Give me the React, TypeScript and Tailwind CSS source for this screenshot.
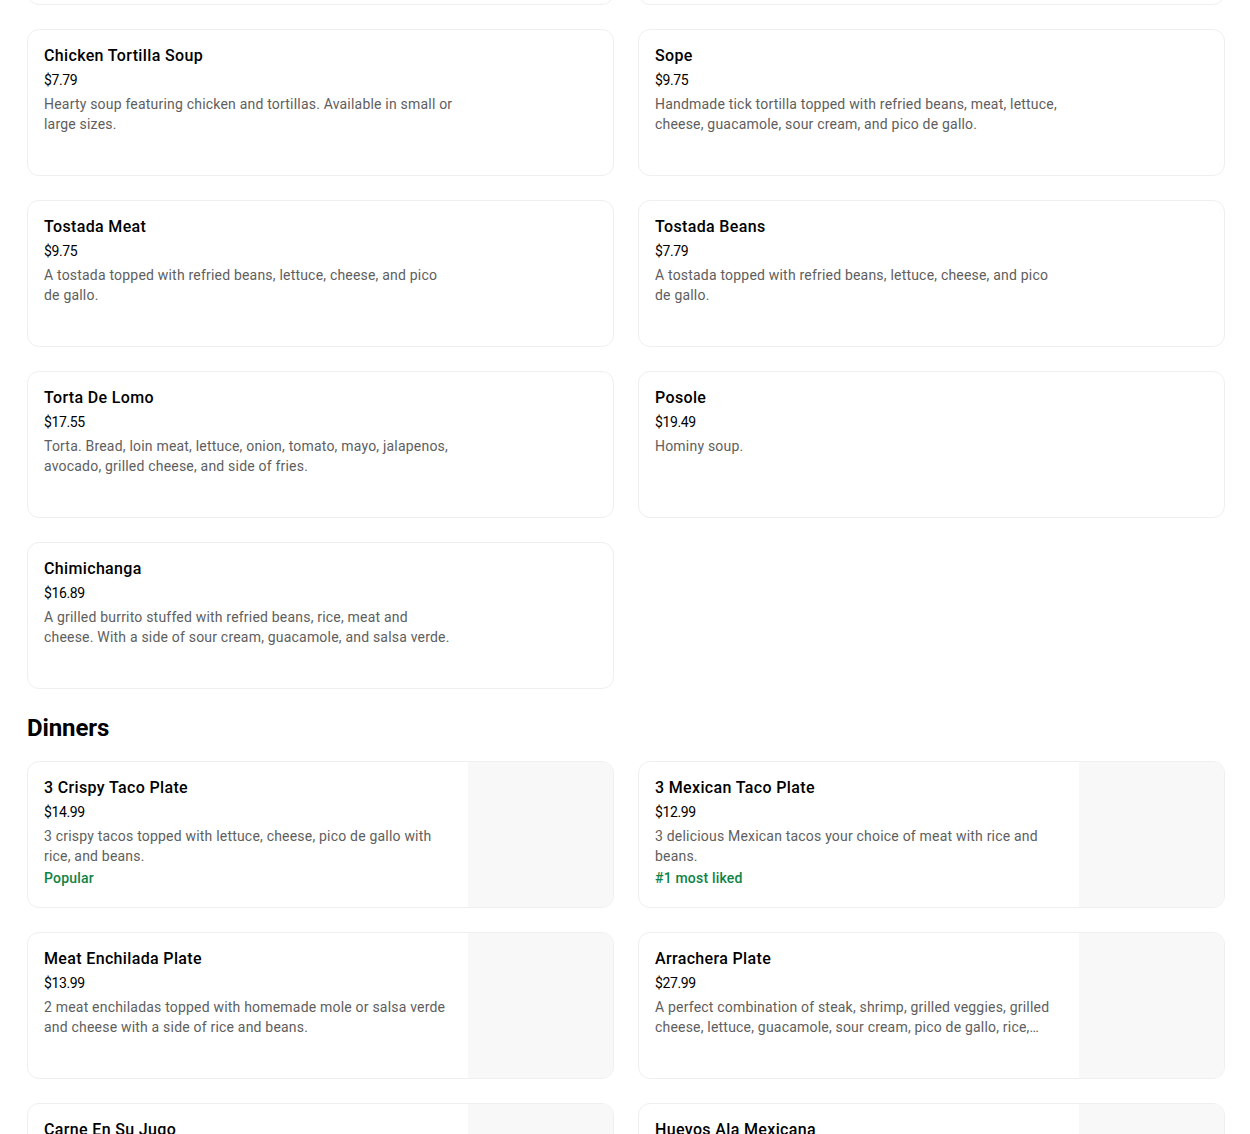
type Item = {
  name: string;
  price: string;
  desc: string;
  tag?: string;
  image?: boolean;
};

const top: Item[] = [
  { name: "Tamales", price: "$3.99", desc: "Handmade tamales." },
  { name: "Tacos", price: "$3.49", desc: "Soft corn tortilla." },
  {
    name: "Chicken Tortilla Soup",
    price: "$7.79",
    desc: "Hearty soup featuring chicken and tortillas. Available in small or large sizes.",
  },
  {
    name: "Sope",
    price: "$9.75",
    desc: "Handmade tick tortilla topped with refried beans, meat, lettuce, cheese, guacamole, sour cream, and pico de gallo.",
  },
  {
    name: "Tostada Meat",
    price: "$9.75",
    desc: "A tostada topped with refried beans, lettuce, cheese, and pico de gallo.",
  },
  {
    name: "Tostada Beans",
    price: "$7.79",
    desc: "A tostada topped with refried beans, lettuce, cheese, and pico de gallo.",
  },
  {
    name: "Torta De Lomo",
    price: "$17.55",
    desc: "Torta. Bread, loin meat, lettuce, onion, tomato, mayo, jalapenos, avocado, grilled cheese, and side of fries.",
  },
  { name: "Posole", price: "$19.49", desc: "Hominy soup." },
  {
    name: "Chimichanga",
    price: "$16.89",
    desc: "A grilled burrito stuffed with refried beans, rice, meat and cheese. With a side of sour cream, guacamole, and salsa verde.",
  },
];

const dinners: Item[] = [
  {
    name: "3 Crispy Taco Plate",
    price: "$14.99",
    desc: "3 crispy tacos topped with lettuce, cheese, pico de gallo with rice, and beans.",
    tag: "Popular",
    image: true,
  },
  {
    name: "3 Mexican Taco Plate",
    price: "$12.99",
    desc: "3 delicious Mexican tacos your choice of meat with rice and beans.",
    tag: "#1 most liked",
    image: true,
  },
  {
    name: "Meat Enchilada Plate",
    price: "$13.99",
    desc: "2 meat enchiladas topped with homemade mole or salsa verde and cheese with a side of rice and beans.",
    image: true,
  },
  {
    name: "Arrachera Plate",
    price: "$27.99",
    desc: "A perfect combination of steak, shrimp, grilled veggies, grilled cheese, lettuce, guacamole, sour cream, pico de gallo, rice,…",
    image: true,
  },
  {
    name: "Carne En Su Jugo",
    price: "$16.99",
    desc: "Beef cooked in its own juice with beans and bacon.",
    image: true,
  },
  {
    name: "Huevos Ala Mexicana",
    price: "$12.99",
    desc: "Scrambled eggs with tomato, onion and jalapeno.",
    image: true,
  },
];

function Card({ item }: { item: Item }) {
  return (
    <div className="flex h-[147px] overflow-hidden rounded-xl border border-[#efefef] bg-white">
      <div className="w-[440px] shrink-0 pl-4 pr-[15px] pt-4">
        <div className="text-[16px] font-medium leading-5 tracking-[0.35px] text-black">
          {item.name}
        </div>
        <div className="mt-1 text-[14px] leading-5 tracking-[-0.4px] text-black">
          {item.price}
        </div>
        <div className="mt-1 line-clamp-2 text-[14px] leading-5 tracking-[0.2px] text-[#5e5e5e]">
          {item.desc}
        </div>
        {item.tag && (
          <div className="mt-[2px] text-[14px] font-medium leading-5 tracking-[0.2px] text-[#0e8345]">
            {item.tag}
          </div>
        )}
      </div>
      {item.image && <div className="flex-1 bg-[#f8f8f8]" />}
    </div>
  );
}

export default function App() {
  return (
    <div
      className="min-h-screen bg-white pb-10 pl-[27px] pr-[25px]"
      style={{ fontFamily: "Roboto, 'Liberation Sans', sans-serif" }}
    >
      <div className="-mt-[142px] grid grid-cols-2 gap-6">
        {top.map((it) => (
          <Card key={it.name} item={it} />
        ))}
      </div>
      <h2 className="mt-[23px] mb-[17px] text-[24px] font-bold leading-8 tracking-[-0.1px] text-black">
        Dinners
      </h2>
      <div className="grid grid-cols-2 gap-6">
        {dinners.map((it) => (
          <Card key={it.name} item={it} />
        ))}
      </div>
    </div>
  );
}
